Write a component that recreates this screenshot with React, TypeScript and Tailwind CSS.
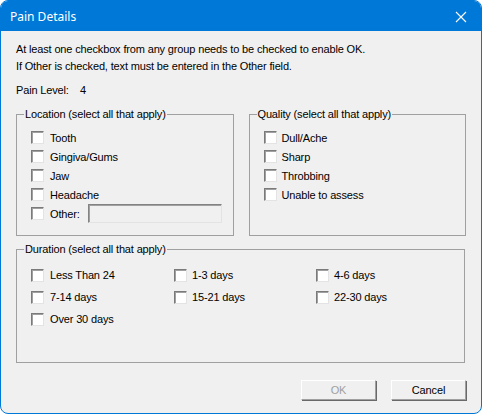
import React from "react";

const font = { fontFamily: '"Liberation Sans", Arial, sans-serif' };

function Check({ label, gap = "gap-[6px]" }: { label: string; gap?: string }) {
  return (
    <div className={`flex items-center ${gap}`}>
      <span className="block w-[13px] h-[13px] bg-white border border-t-[#7a7a7a] border-l-[#7a7a7a] border-r-[#e3e3e3] border-b-[#e3e3e3] shadow-[inset_1px_1px_0_#a0a0a0]" />
      <span className="leading-[14px] text-black">{label}</span>
    </div>
  );
}

function Legend({ children }: { children: React.ReactNode }) {
  return (
    <legend className="ml-[-7px] px-[1px] h-[14px] leading-[14px] text-black">{children}</legend>
  );
}

export default function App() {
  return (
    <div
      className="w-[482px] h-[414px] bg-[#f0f0f0] border border-[#0078d7] rounded-t-[8px] rounded-b-[8px] overflow-hidden flex flex-col text-[11px] tracking-[-0.15px]"
      style={font}
    >
      <div className="h-[30px] bg-[#0078d7] flex items-center justify-between pl-[9px] pr-[14px] shrink-0">
        <span className="text-white text-[12px] leading-[14px] mt-[1px] tracking-normal" style={{ fontFamily: '"Noto Sans", "Liberation Sans", sans-serif' }}>Pain Details</span>
        <svg width="12" height="12" viewBox="0 0 12 12" className="mt-[1px]">
          <path d="M1 1 L11 11 M11 1 L1 11" stroke="white" strokeWidth="1.1" />
        </svg>
      </div>

      <div className="flex flex-col pl-[15px] pr-[15px] pt-[10px]">
        <div className="leading-[17px] text-black">At least one checkbox from any group needs to be checked to enable OK.</div>
        <div className="leading-[17px] text-black">If Other is checked, text must be entered in the Other field.</div>
        <div className="leading-[17px] text-black mt-[7px] flex">
          <span className="w-[64px]">Pain Level:</span>
          <span>4</span>
        </div>

        <div className="flex gap-[15px] mt-[8px]">
          <fieldset className="w-[218px] h-[129px] border border-[#a0a0a0] pl-[14px] pr-[10px] pt-[7px]">
            <Legend>Location (select all that apply)</Legend>
            <div className="flex flex-col">
              <div className="h-[19px] flex items-center"><Check label="Tooth" /></div>
              <div className="h-[19px] flex items-center"><Check label="Gingiva/Gums" /></div>
              <div className="h-[19px] flex items-center"><Check label="Jaw" /></div>
              <div className="h-[19px] flex items-center"><Check label="Headache" /></div>
              <div className="h-[19px] flex items-center">
                <div className="w-[57px]"><Check label="Other:" /></div>
                <div className="w-[134px] h-[19px] bg-[#f0f0f0] border border-t-[#838383] border-l-[#838383] border-r-[#e3e3e3] border-b-[#e3e3e3] shadow-[inset_1px_1px_0_#a0a0a0]" />
              </div>
            </div>
          </fieldset>

          <fieldset className="w-[218px] h-[129px] border border-[#a0a0a0] pl-[14px] pr-[10px] pt-[7px]">
            <Legend>Quality (select all that apply)</Legend>
            <div className="flex flex-col">
              <div className="h-[19px] flex items-center"><Check label="Dull/Ache" gap="gap-[5px]" /></div>
              <div className="h-[19px] flex items-center"><Check label="Sharp" gap="gap-[5px]" /></div>
              <div className="h-[19px] flex items-center"><Check label="Throbbing" gap="gap-[5px]" /></div>
              <div className="h-[19px] flex items-center"><Check label="Unable to assess" gap="gap-[5px]" /></div>
            </div>
          </fieldset>
        </div>

        <fieldset className="w-[449px] h-[121px] mt-[6px] border border-[#a0a0a0] pl-[14px] pt-[8px]">
          <Legend>Duration (select all that apply)</Legend>
          <div className="grid grid-cols-[143px_142px_1fr]">
            <div className="h-[22px] flex items-center"><Check label="Less Than 24" /></div>
            <div className="h-[22px] flex items-center"><Check label="1-3 days" gap="gap-[5px]" /></div>
            <div className="h-[22px] flex items-center"><Check label="4-6 days" gap="gap-[5px]" /></div>
            <div className="h-[22px] flex items-center"><Check label="7-14 days" /></div>
            <div className="h-[22px] flex items-center"><Check label="15-21 days" gap="gap-[5px]" /></div>
            <div className="h-[22px] flex items-center"><Check label="22-30 days" gap="gap-[5px]" /></div>
            <div className="h-[22px] flex items-center"><Check label="Over 30 days" /></div>
          </div>
        </fieldset>

        <div className="flex justify-end gap-[15px] mt-[17px]">
          <button className="w-[75px] h-[20px] bg-[#f0f0f0] border border-t-[#ffffff] border-l-[#ffffff] border-r-[#a0a0a0] border-b-[#a0a0a0] shadow-[1px_1px_0_#696969] text-[#a0a0a0] text-[11px] leading-[14px]" style={font}>OK</button>
          <button className="w-[75px] h-[20px] bg-[#f0f0f0] border border-t-[#ffffff] border-l-[#ffffff] border-r-[#a0a0a0] border-b-[#a0a0a0] shadow-[1px_1px_0_#696969] text-black text-[11px] leading-[14px]" style={font}>Cancel</button>
        </div>
      </div>
    </div>
  );
}
